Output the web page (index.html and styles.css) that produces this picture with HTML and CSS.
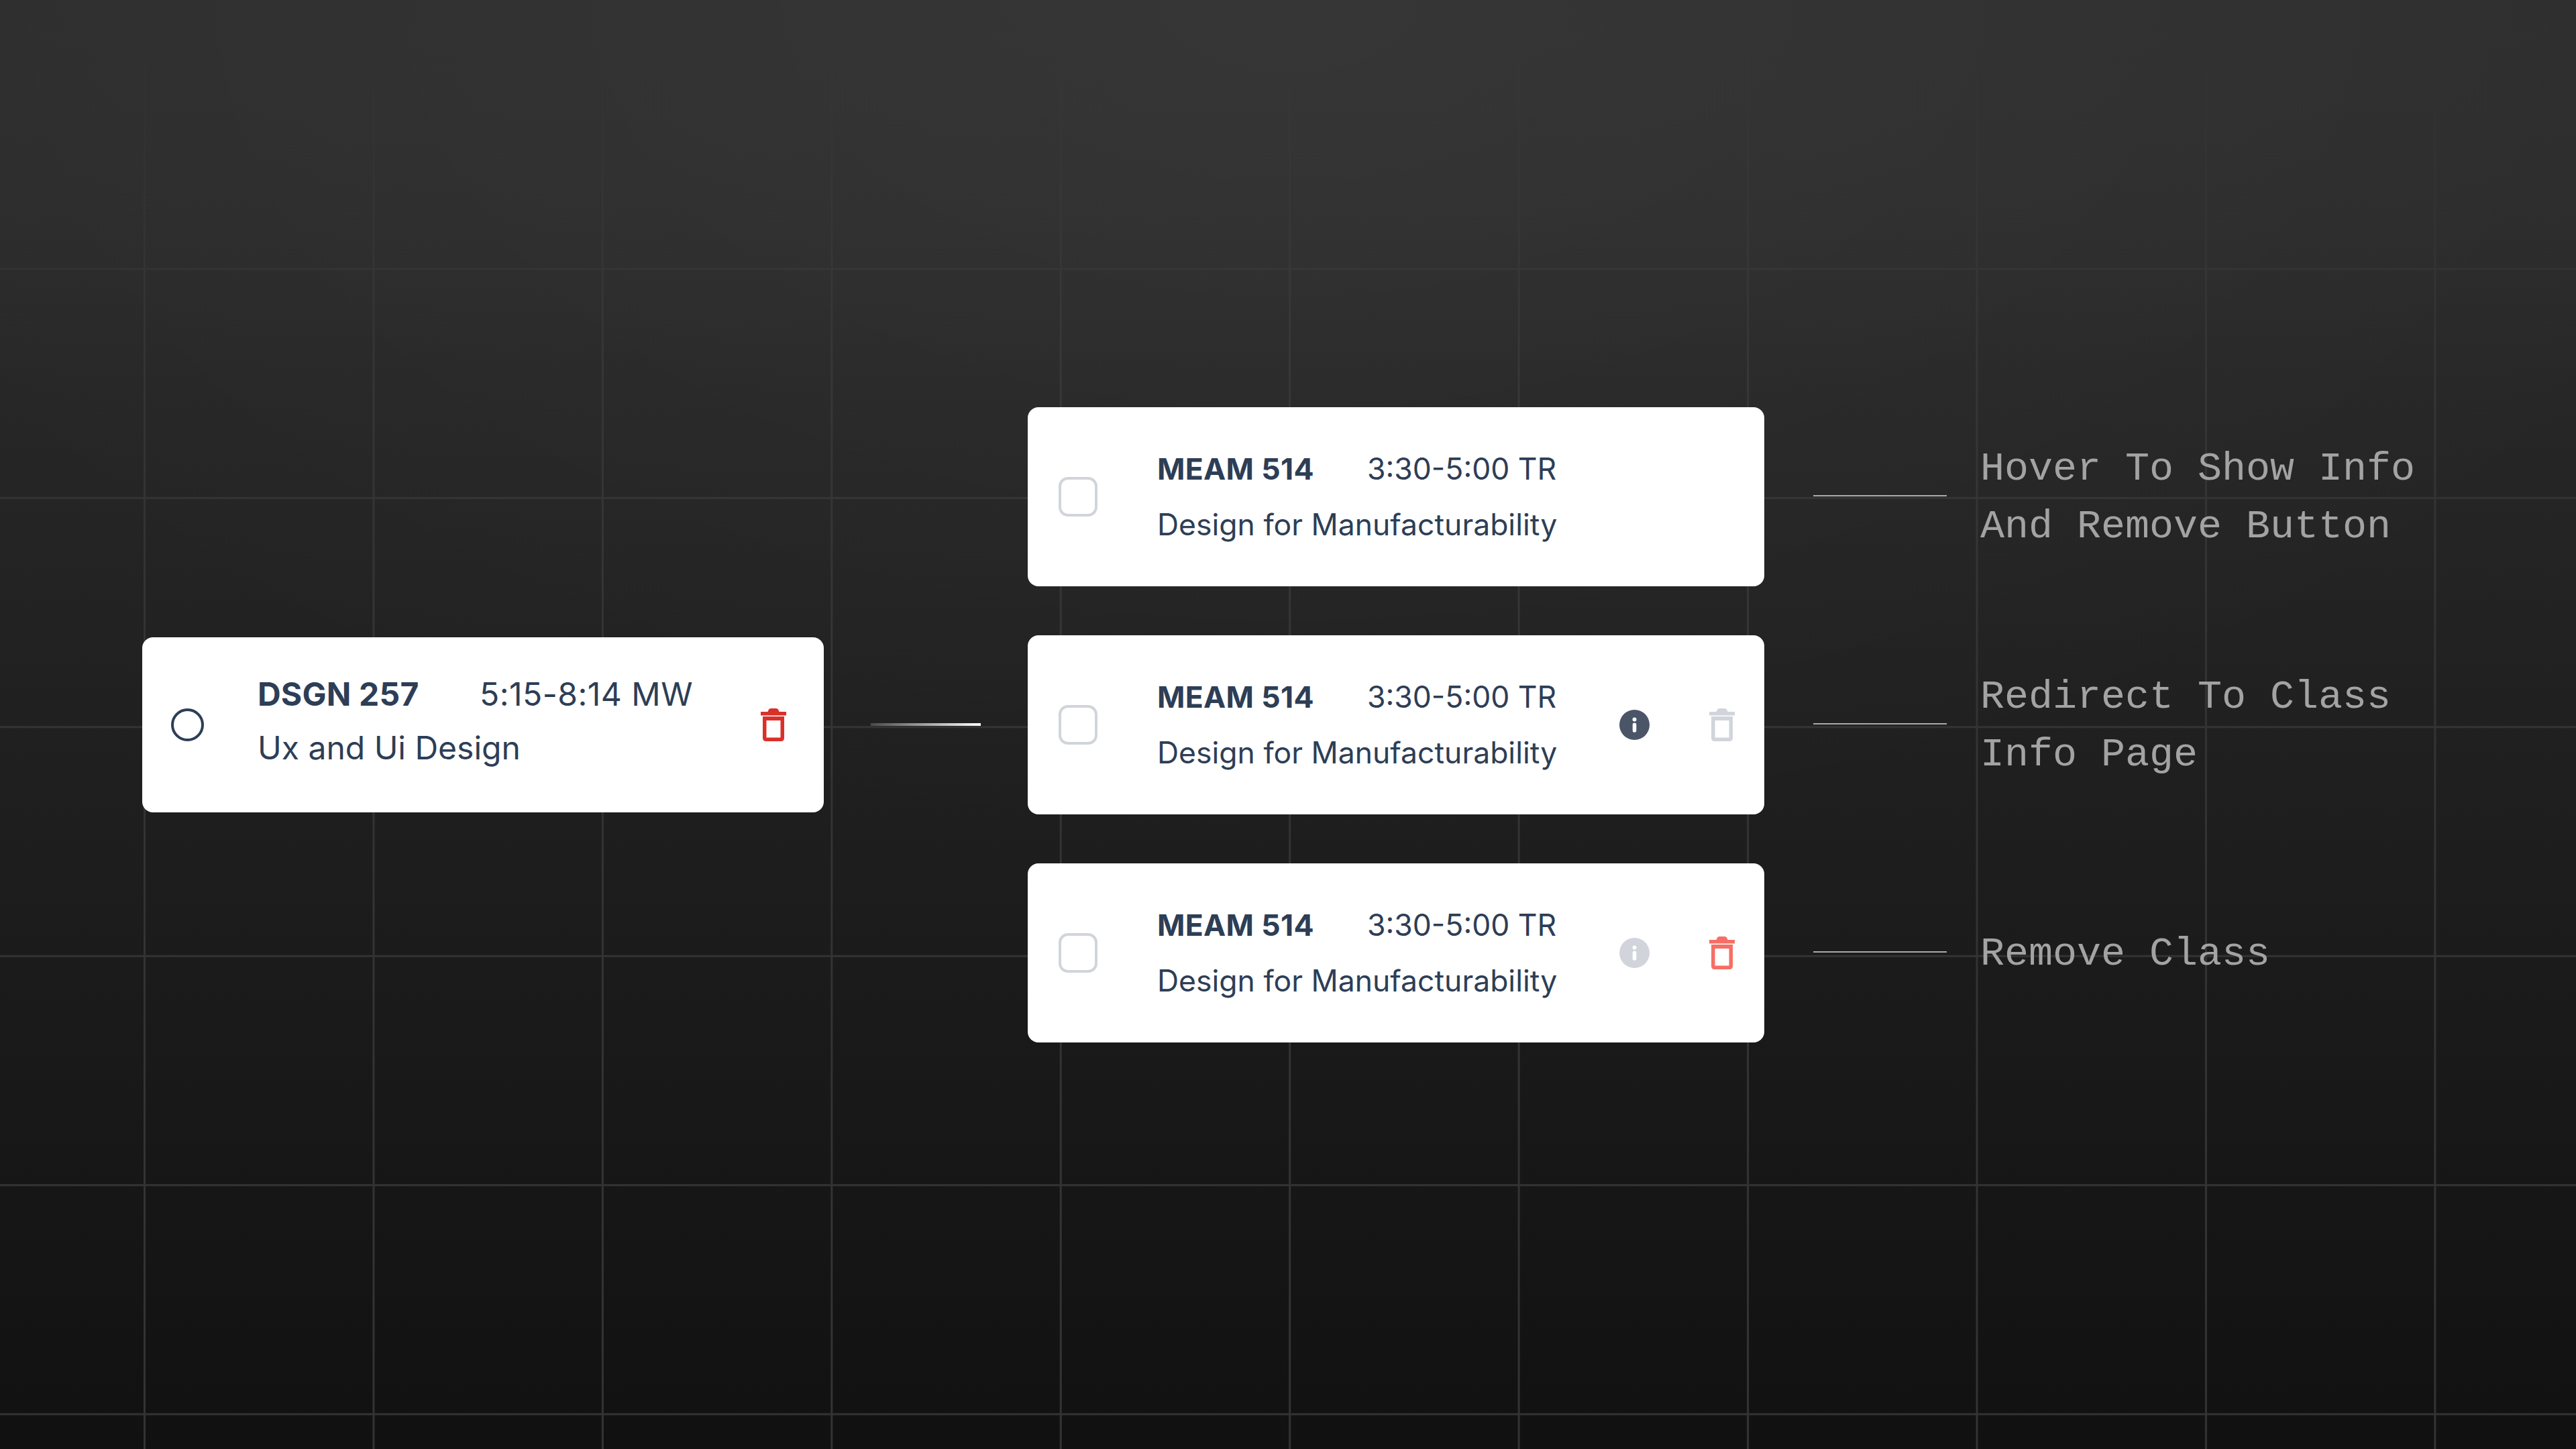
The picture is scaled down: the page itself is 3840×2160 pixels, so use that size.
FILE: index.html
```html
<!DOCTYPE html>
<html lang="en">
<head>
<meta charset="utf-8">
<title>Class card states</title>
<link rel="stylesheet" href="styles.css">
</head>
<body>
<svg class="defs" width="0" height="0" aria-hidden="true">
  <symbol id="trash" viewBox="0 0 38 49">
    <path fill-rule="evenodd" d="M12 1.5Q13 0 15 0H23Q25 0 26 1.5L27.5 5H38V10.5H0V5H10.5ZM3 12H35V44Q35 49 30 49H8Q3 49 3 44ZM8.5 18V43.5H29.5V18Z"/>
  </symbol>
  <symbol id="info" viewBox="0 0 45 45">
    <path fill-rule="evenodd" d="M22.5 0a22.5 22.5 0 1 0 0 45a22.5 22.5 0 1 0 0-45ZM22.5 11.5a3 3 0 1 1 0 6a3 3 0 1 1 0-6ZM22.5 19.5a2.8 2.8 0 0 1 2.8 2.8V31a2.8 2.8 0 0 1-5.6 0V22.3a2.8 2.8 0 0 1 2.8-2.8Z"/>
  </symbol>
</svg>
<main class="stage">
  <article class="card card-solo">
    <span class="radio"></span>
    <div class="text">
      <div class="meta"><strong class="code">DSGN 257</strong><span class="time">5:15-8:14 MW</span></div>
      <div class="title">Ux and Ui Design</div>
    </div>
    <svg class="icon-trash red"><use href="#trash"/></svg>
  </article>
  <div class="connector"></div>
  <div class="stack">
    <section class="row">
      <article class="card card-item">
        <span class="check"></span>
        <div class="text">
          <div class="meta"><strong class="code">MEAM 514</strong><span class="time">3:30-5:00 TR</span></div>
          <div class="title">Design for Manufacturability</div>
        </div>
      </article>
      <div class="rule"></div>
      <p class="label">Hover To Show Info<br>And Remove Button</p>
    </section>
    <section class="row">
      <article class="card card-item">
        <span class="check"></span>
        <div class="text">
          <div class="meta"><strong class="code">MEAM 514</strong><span class="time">3:30-5:00 TR</span></div>
          <div class="title">Design for Manufacturability</div>
        </div>
        <svg class="icon-info slate"><use href="#info"/></svg>
        <svg class="icon-trash grey"><use href="#trash"/></svg>
      </article>
      <div class="rule"></div>
      <p class="label">Redirect To Class<br>Info Page</p>
    </section>
    <section class="row">
      <article class="card card-item">
        <span class="check"></span>
        <div class="text">
          <div class="meta"><strong class="code">MEAM 514</strong><span class="time">3:30-5:00 TR</span></div>
          <div class="title">Design for Manufacturability</div>
        </div>
        <svg class="icon-info pale"><use href="#info"/></svg>
        <svg class="icon-trash coral"><use href="#trash"/></svg>
      </article>
      <div class="rule"></div>
      <p class="label">Remove Class</p>
    </section>
  </div>
</main>
</body>
</html>
```
FILE: styles.css
```css
* { box-sizing: border-box; }
html, body { margin: 0; height: 100%; }
body {
  overflow: hidden;
  background-color: #111;
  background-image:
    radial-gradient(ellipse 2300px 1300px at 1920px 0, rgba(255, 255, 255, 0.04), rgba(255, 255, 255, 0)),
    linear-gradient(to bottom, #2e2e2e 40px, rgba(44, 44, 44, 0) 560px),
    linear-gradient(to right, #333 3px, transparent 3px),
    linear-gradient(to bottom, #333 3px, transparent 3px),
    linear-gradient(to bottom, #2f2f2f, #111);
  background-size: 100% 100%, 100% 100%, 341.45px 341.45px, 341.45px 341.45px, 100% 100%;
  background-position: 0 0, 0 0, 214px 0, 0 58px, 0 0;
  font-family: Inter, "Liberation Sans", sans-serif;
  color: #2d3e56;
}
.defs { position: absolute; }
.stage {
  height: 100%;
  display: flex;
  align-items: center;
  padding-left: 212px;
}
.card {
  flex: none;
  display: flex;
  align-items: center;
  background: #fff;
  border-radius: 16px;
}
.card-solo { width: 1016px; height: 261px; padding: 0 56px 0 43px; }
.card-item { width: 1098px; height: 267px; padding: 0 44px 0 46px; }
.text { flex: 1; }
.meta { display: flex; }
.code { font-weight: 700; }
.card-solo .text { margin: 0 0 10px 80px; font-size: 48px; }
.card-solo .time { letter-spacing: 0.5px; }
.card-solo .meta { line-height: 80px; }
.card-solo .title { line-height: 80px; }
.card-solo .code { width: 331px; letter-spacing: 0.2px; }
.card-item .text { margin: 2px 0 0 89px; font-size: 44.5px; }
.card-item .meta, .card-item .title { line-height: 83px; }
.card-item .code { width: 313px; letter-spacing: 0.3px; }
.radio {
  flex: none;
  width: 49px;
  height: 49px;
  border: 4.5px solid #2d3e56;
  border-radius: 50%;
}
.check {
  flex: none;
  width: 58px;
  height: 59px;
  border: 4px solid #d1d5db;
  border-radius: 14px;
}
.icon-trash { flex: none; width: 38px; height: 49px; fill: currentColor; }
.icon-info { flex: none; width: 45px; height: 45px; margin-right: 89px; fill: currentColor; }
.red { color: #d9302a; }
.coral { color: #f56f66; }
.grey { color: #d1d5db; }
.slate { color: #4a5568; }
.pale { color: #d1d5db; }
.connector {
  flex: none;
  width: 164px;
  height: 4px;
  margin: 0 70px;
  background: linear-gradient(to right, #4a4a4a, #fff);
}
.stack { display: flex; flex-direction: column; gap: 73px; }
.row { display: flex; align-items: center; }
.rule {
  flex: none;
  width: 199px;
  height: 2px;
  margin: -3px 50px 0 73px;
  background: #aaa;
}
.label {
  margin: 4px 0 0;
  font-family: "Liberation Mono", monospace;
  font-size: 60px;
  line-height: 86px;
  color: #a3a3a3;
}
```
